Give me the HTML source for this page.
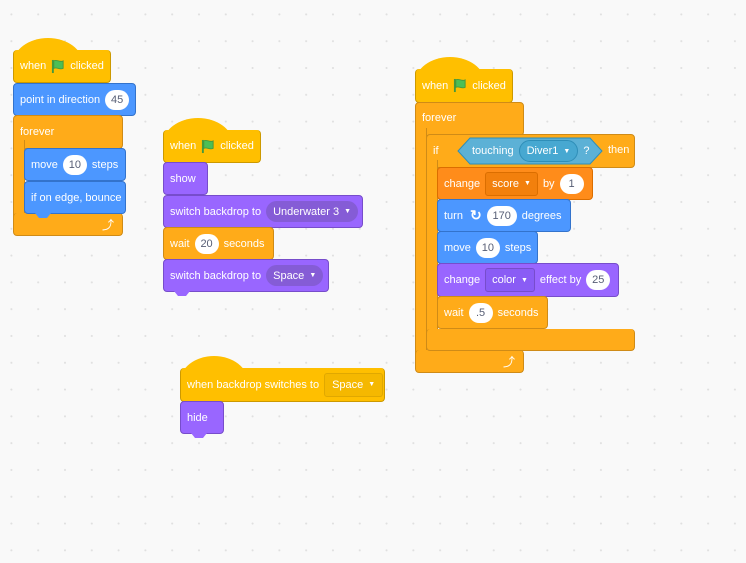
<!DOCTYPE html>
<html><head><style>
body{margin:0;width:746px;height:563px;overflow:hidden;background-color:#f9f9f9;
background-image:radial-gradient(circle,#e0e0e0 0.8px,transparent 1.2px);background-size:26.8px 26.8px;background-position:-2px 1px;
font-family:"Liberation Sans",sans-serif;font-size:11px;color:#fff;position:relative}
.b{position:absolute;border-radius:4px;display:flex;align-items:center;box-sizing:border-box;padding-left:6px;white-space:pre;border:1px solid rgba(0,0,0,.15)}
.ev{background:#ffbf00;border-color:#cc9900}
.mo{background:#4c97ff;border-color:#3373cc}
.lo{background:#9966ff;border-color:#774dcb}
.co{background:#ffab19;border-color:#cf8b17}
.va{background:#ff8c1a;border-color:#db6e00}
.cap{position:absolute;height:26px;border-radius:50% 50% 0 0/100% 100% 0 0;background:#ffbf00}
.tab{position:absolute;width:16px;height:5px;clip-path:polygon(0 0,100% 0,75% 100%,25% 100%)}
.ov{background:#fff;color:#575e75;border-radius:11px;height:20px;display:inline-flex;align-items:center;justify-content:center;margin:0 5px;min-width:24px;padding:0 3px;box-sizing:border-box}
.dd{border-radius:11px;height:21px;display:inline-flex;align-items:center;padding:0 7px;margin:0 5px}
.ddl{background:#855cd6}
.tri{font-size:7px;margin-left:5px}
.flag{display:inline-block;width:14px;height:15px;margin:0 5px;vertical-align:middle}
</style></head><body>
<svg width="0" height="0" style="position:absolute"><defs><g id="fl"><path d="M2 1v14" stroke="#45993d" stroke-width="2"/><path d="M3 2c3-2 6 2 10 0v8c-4 2-7-2-10 0z" fill="#4cbf56" stroke="#45993d" stroke-width="1"/></g></defs></svg>

<!-- stack 1 -->
<div class="cap" style="left:13px;top:38px;width:70px"></div>
<div class="b ev" style="left:13px;top:50px;width:98px;height:33px;border-top:none">when<svg class="flag" viewBox="0 0 15 16"><use href="#fl"/></svg>clicked</div>
<div class="b mo" style="left:13px;top:83px;width:123px;height:33px">point in direction<span class="ov">45</span></div>
<div class="b co" style="left:13px;top:115px;width:110px;height:34px;align-items:flex-start;padding-top:10px">forever</div>
<div class="b co" style="left:13px;top:140px;width:12px;height:80px;border-radius:0;border-top:none;border-bottom:none"></div>
<div class="b co" style="left:13px;top:213px;width:110px;height:23px;border-top:none;justify-content:flex-end;padding-right:8px;font-size:12px">⤴</div>
<div class="b mo" style="left:24px;top:148px;width:102px;height:33px">move<span class="ov">10</span>steps</div>
<div class="b mo" style="left:24px;top:181px;width:102px;height:33px">if on edge, bounce</div>
<div class="tab mo" style="left:35px;top:213px;background:#4c97ff"></div>

<!-- stack 2 -->
<div class="cap" style="left:163px;top:118px;width:70px"></div>
<div class="b ev" style="left:163px;top:130px;width:98px;height:33px;border-top:none">when<svg class="flag" viewBox="0 0 15 16"><use href="#fl"/></svg>clicked</div>
<div class="b lo" style="left:163px;top:162px;width:45px;height:33px">show</div>
<div class="b lo" style="left:163px;top:195px;width:200px;height:33px">switch backdrop to<span class="dd ddl">Underwater 3<span class="tri">▼</span></span></div>
<div class="b co" style="left:163px;top:227px;width:111px;height:33px">wait<span class="ov">20</span>seconds</div>
<div class="b lo" style="left:163px;top:259px;width:166px;height:33px">switch backdrop to<span class="dd ddl">Space<span class="tri">▼</span></span></div>
<div class="tab" style="left:174px;top:291px;background:#9966ff"></div>

<!-- stack 3 -->
<div class="cap" style="left:180px;top:356px;width:68px"></div>
<div class="b ev" style="left:180px;top:368px;width:205px;height:34px;border-top:none">when backdrop switches to<span class="dd" style="border-radius:3px;border:1px solid #e0a800;background:#f5b800;padding:0 7px;height:22px">Space<span class="tri">▼</span></span></div>
<div class="b lo" style="left:180px;top:401px;width:44px;height:33px">hide</div>
<div class="tab" style="left:191px;top:433px;background:#9966ff"></div>

<!-- stack 4 -->
<div class="cap" style="left:415px;top:57px;width:70px"></div>
<div class="b ev" style="left:415px;top:69px;width:98px;height:34px;border-top:none">when<svg class="flag" viewBox="0 0 15 16"><use href="#fl"/></svg>clicked</div>
<div class="b co" style="left:415px;top:102px;width:109px;height:34px;align-items:flex-start;padding-top:9px">forever</div>
<div class="b co" style="left:415px;top:128px;width:12px;height:230px;border-radius:0;border-top:none;border-bottom:none"></div>
<div class="b co" style="left:415px;top:350px;width:109px;height:23px;border-top:none;justify-content:flex-end;padding-right:8px;font-size:12px">⤴</div>
<div class="b co" style="left:426px;top:134px;width:209px;height:34px">if</div>
<svg style="position:absolute;left:457px;top:137px" width="146" height="28"><path d="M1 14 L13 1 H133 L145 14 L133 27 H13 Z" fill="#5cb1d6" stroke="#2e8eb8"/></svg>
<div style="position:absolute;left:472px;top:137px;height:28px;display:flex;align-items:center">touching<span class="dd" style="background:#47a8d1;border:1px solid #2e8eb8;height:20px">Diver1<span class="tri">▼</span></span>?</div>
<div style="position:absolute;left:608px;top:144px">then</div>
<div class="b co" style="left:426px;top:160px;width:12px;height:175px;border-radius:0;border-top:none;border-bottom:none"></div>
<div class="b co" style="left:426px;top:329px;width:209px;height:22px;border-top:none"></div>
<div class="b va" style="left:437px;top:167px;width:156px;height:33px">change<span class="dd" style="border-radius:3px;border:1px solid #db6e00;background:#f2800d;padding:0 6px;height:22px">score<span class="tri">▼</span></span>by<span class="ov">1</span></div>
<div class="b mo" style="left:437px;top:199px;width:134px;height:33px">turn<span style="margin-left:7px;font-size:14px;font-weight:bold">↻</span><span class="ov" style="min-width:30px">170</span>degrees</div>
<div class="b mo" style="left:437px;top:231px;width:101px;height:33px">move<span class="ov">10</span>steps</div>
<div class="b lo" style="left:437px;top:263px;width:182px;height:34px">change<span class="dd" style="border-radius:3px;border:1px solid #774dcb;background:#8a5cf5;padding:0 6px;height:22px">color<span class="tri">▼</span></span>effect by<span class="ov">25</span></div>
<div class="b co" style="left:437px;top:296px;width:111px;height:33px">wait<span class="ov">.5</span>seconds</div>
</body></html>
